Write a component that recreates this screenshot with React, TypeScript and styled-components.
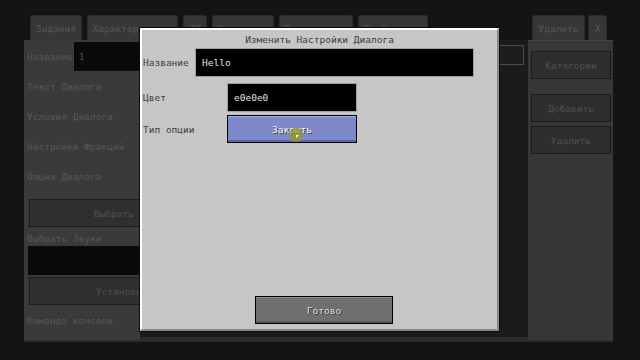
import React from 'react';
import styled, { createGlobalStyle } from 'styled-components';

const GlobalStyle = createGlobalStyle`
  html, body {
    margin: 0;
    padding: 0;
    background: #141412;
  }
  * {
    box-sizing: border-box;
  }
`;

const FONT = `'DejaVu Sans Mono', 'Liberation Mono', monospace`;

const Screen = styled.div`
  position: relative;
  width: 640px;
  height: 360px;
  overflow: hidden;
  background: #141412;
  padding: 15px 0 0 24px;
  font-family: ${FONT};
  font-size: 9.5px;
`;

const TabRow = styled.div`
  display: flex;
  gap: 5px;
  height: 25px;
  padding-left: 6px;
`;

const Tab = styled.div<{ w: number; push?: number }>`
  display: flex;
  align-items: center;
  justify-content: center;
  width: ${({ w }) => w}px;
  margin-left: ${({ push }) => push ?? 0}px;
  border-radius: 3px 3px 0 0;
  border: 1px solid #2a2a2a;
  border-bottom: none;
  background: #373737;
  color: #565656;
  white-space: nowrap;
  overflow: hidden;
`;

const Panel = styled.div`
  display: grid;
  grid-template-columns: 116px 388px 85px;
  width: 589px;
  height: 302px;
  background: #2c2c2c;
`;

const LeftCol = styled.div`
  display: flex;
  flex-direction: column;
  padding: 2px 0 0 3px;
  height: 300px;
  background: #3a3a3a;
  color: #575757;
`;

const BgRow = styled.div`
  display: flex;
  align-items: center;
  height: 29px;
`;

const BgLabel = styled.div<{ h: number; top?: number }>`
  display: flex;
  align-items: center;
  height: ${({ h }) => h}px;
  margin-top: ${({ top }) => top ?? 0}px;
  white-space: nowrap;
`;

const BgInput = styled.div<{ w: number; left?: number }>`
  display: flex;
  align-items: center;
  flex-shrink: 0;
  width: ${({ w }) => w}px;
  height: 29px;
  margin-left: ${({ left }) => left ?? 0}px;
  padding-left: 5px;
  background: #0a0a0a;
  color: #4a4a4a;
`;

const BgButton = styled.div<{ w: number; top: number }>`
  display: flex;
  align-items: center;
  justify-content: center;
  flex-shrink: 0;
  width: ${({ w }) => w}px;
  height: 28px;
  margin: ${({ top }) => top}px 0 0 2px;
  border: 1px solid #1c1c1c;
  background: #2f2f2f;
  color: #515151;
`;

const MidCol = styled.div`
  height: 297px;
  background: #1b1b1b;
  padding-top: 5px;
`;

const SearchBox = styled.div`
  width: 224px;
  height: 20px;
  margin-left: 160px;
  border: 1px solid #4c4c4c;
  background: #1d1d1d;
`;

const RightCol = styled.div`
  display: flex;
  flex-direction: column;
  height: 300px;
  padding: 10px 2px 0 3px;
  background: #373737;
  border-top: 1px solid #434343;
`;

const SideButton = styled.div<{ top: number }>`
  display: flex;
  align-items: center;
  justify-content: center;
  height: 28px;
  margin-top: ${({ top }) => top}px;
  border: 1px solid #1a1a1a;
  background: #2e2e2e;
  color: #4e4e4e;
`;

const Dialog = styled.div`
  position: absolute;
  left: 140px;
  top: 28px;
  width: 359px;
  height: 303px;
  display: flex;
  flex-direction: column;
  padding: 0 1px;
  background: #c6c6c6;
  border-top: 2px solid #ffffff;
  border-left: 2px solid #ffffff;
  border-right: 2px solid #8b8b8b;
  border-bottom: 2px solid #8b8b8b;
  box-shadow: 0 0 0 1px #0c0c0c;
  color: #404040;
`;

const Title = styled.div`
  display: flex;
  align-items: center;
  justify-content: center;
  height: 18px;
`;

const FieldRow = styled.div<{ top?: number }>`
  display: flex;
  align-items: center;
  margin-top: ${({ top }) => top ?? 0}px;
`;

const FieldLabel = styled.div<{ w: number }>`
  width: ${({ w }) => w}px;
  flex-shrink: 0;
  white-space: nowrap;
`;

const TextField = styled.div<{ w: number }>`
  display: flex;
  align-items: center;
  width: ${({ w }) => w}px;
  height: 29px;
  padding-left: 6px;
  background: #000;
  border: 1px solid #a0a0a0;
  color: #e0e0e0;
`;

const McButton = styled.div<{ w: number; hovered?: boolean }>`
  display: flex;
  align-items: center;
  justify-content: center;
  width: ${({ w }) => w}px;
  height: 28px;
  border: 1px solid #000;
  background: ${({ hovered }) => (hovered ? '#7e89c9' : '#6f6f6f')};
  box-shadow: inset 0 1px 0 ${({ hovered }) => (hovered ? '#a8b0e4' : '#8d8d8d')},
    inset 0 -2px 0 ${({ hovered }) => (hovered ? '#5c66a9' : '#555555')};
  color: ${({ hovered }) => (hovered ? '#fdfdf2' : '#dcdcdc')};
  text-shadow: 1px 1px 0 ${({ hovered }) => (hovered ? '#3c3f5c' : '#3a3a3a')};
`;

const Footer = styled.div`
  display: flex;
  margin-top: auto;
  margin-bottom: 5px;
  padding-left: 112px;
`;

const CursorDot = styled.div`
  position: absolute;
  left: 289px;
  top: 128px;
  width: 14px;
  height: 14px;
  border-radius: 50%;
  background: rgba(150, 155, 40, 0.8);

  &::after {
    content: '';
    position: absolute;
    left: 7px;
    top: 7px;
    width: 0;
    height: 0;
    border-left: 3px solid #fff;
    border-bottom: 3px solid transparent;
  }
`;

const App: React.FC = () => {
  return (
    <>
      <GlobalStyle />
      <Screen>
        <TabRow>
          <Tab w={52}>Задания</Tab>
          <Tab w={91}>Характеристики</Tab>
          <Tab w={24}>ИИ</Tab>
          <Tab w={62}>Инвентарь</Tab>
          <Tab w={74}>Расширенные</Tab>
          <Tab w={70}>Глобальные</Tab>
          <Tab w={53} push={99}>
            Удалить
          </Tab>
          <Tab w={19} push={-2}>
            X
          </Tab>
        </TabRow>
        <Panel>
          <LeftCol>
            <BgRow>
              <span>Название</span>
              <BgInput w={140} left={1}>
                1
              </BgInput>
            </BgRow>
            <BgLabel h={30}>Текст Диалога</BgLabel>
            <BgLabel h={30}>Условия Диалога</BgLabel>
            <BgLabel h={30}>Настройки Фракций</BgLabel>
            <BgLabel h={30}>Опции Диалога</BgLabel>
            <BgButton w={170} top={8}>
              Выбрать
            </BgButton>
            <BgLabel h={16} top={3}>
              Выбрать Звуки
            </BgLabel>
            <BgRow>
              <BgInput w={200} left={1} />
            </BgRow>
            <BgButton w={191} top={2}>
              Установить
            </BgButton>
            <BgLabel h={30}>Команда консоли</BgLabel>
          </LeftCol>
          <MidCol>
            <SearchBox />
          </MidCol>
          <RightCol>
            <SideButton top={0}>Категории</SideButton>
            <SideButton top={15}>Добавить</SideButton>
            <SideButton top={4}>Удалить</SideButton>
          </RightCol>
        </Panel>

        <Dialog>
          <Title>Изменить Настройки Диалога</Title>
          <FieldRow>
            <FieldLabel w={52}>Название</FieldLabel>
            <TextField w={279}>Hello</TextField>
          </FieldRow>
          <FieldRow top={6}>
            <FieldLabel w={84}>Цвет</FieldLabel>
            <TextField w={130}>e0e0e0</TextField>
          </FieldRow>
          <FieldRow top={3}>
            <FieldLabel w={84}>Тип опции</FieldLabel>
            <McButton w={130} hovered>
              Закрыть
            </McButton>
          </FieldRow>
          <Footer>
            <McButton w={138}>Готово</McButton>
          </Footer>
        </Dialog>
        <CursorDot />
      </Screen>
    </>
  );
};

export default App;
